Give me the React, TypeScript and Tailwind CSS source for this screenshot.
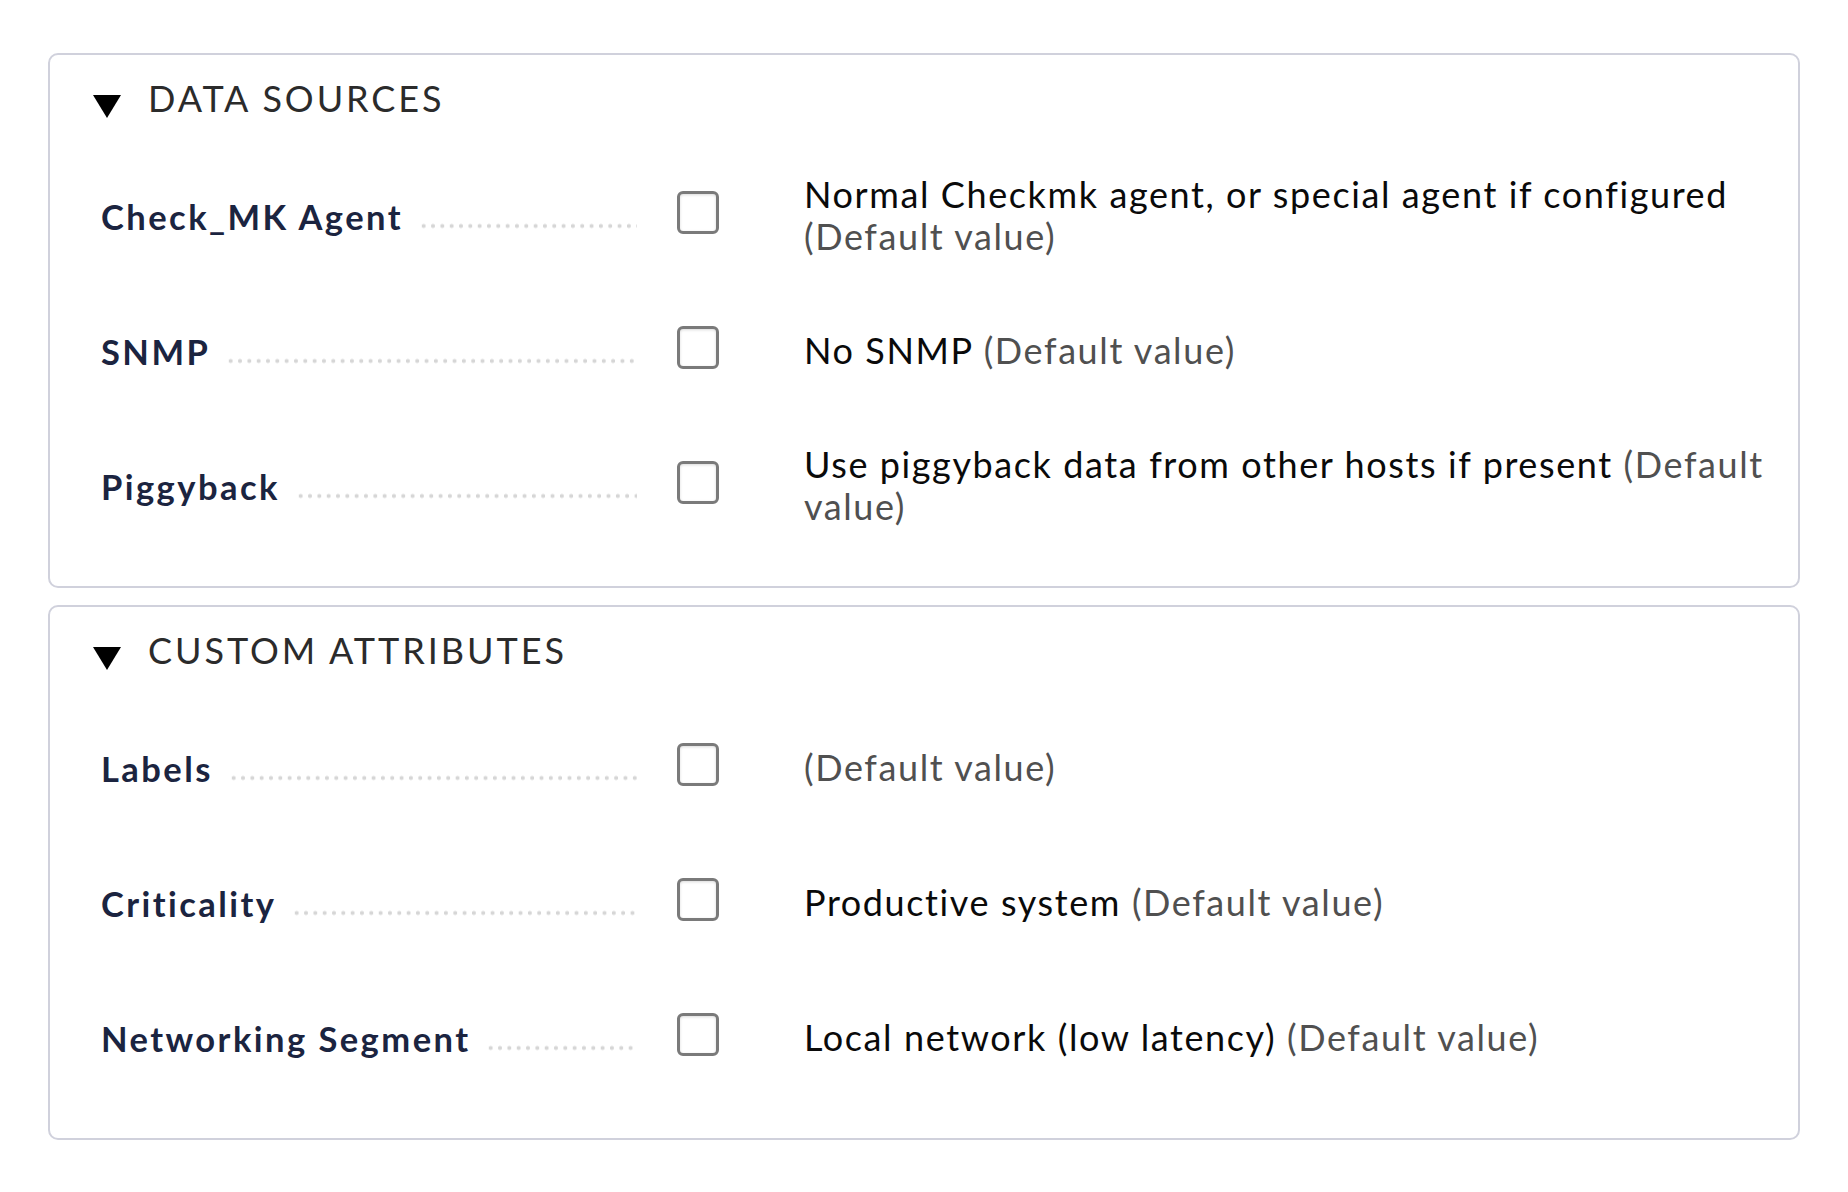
import React from "react";

type Row = { label: string; value?: string };

const sections: { title: string; rows: Row[] }[] = [
  {
    title: "DATA SOURCES",
    rows: [
      { label: "Check_MK Agent", value: "Normal Checkmk agent, or special agent if configured" },
      { label: "SNMP", value: "No SNMP" },
      { label: "Piggyback", value: "Use piggyback data from other hosts if present" },
    ],
  },
  {
    title: "CUSTOM ATTRIBUTES",
    rows: [
      { label: "Labels" },
      { label: "Criticality", value: "Productive system" },
      { label: "Networking Segment", value: "Local network (low latency)" },
    ],
  },
];

function Triangle() {
  return (
    <svg width="28" height="23" viewBox="0 0 28 23" className="mt-[19px] shrink-0">
      <polygon points="0,0 28,0 14,23" fill="#000" />
    </svg>
  );
}

function Section({ title, rows, first }: { title: string; rows: Row[]; first?: boolean }) {
  return (
    <div
      className={`border-2 border-[#d0d1dc] rounded-[10px] bg-white pt-[21px] pb-[34px] ${first ? "" : "mt-[17px]"}`}
    >
      <div className="flex items-start h-[44px] pl-[43px]">
        <Triangle />
        <div className="ml-[27px] text-[36px] leading-[44px] tracking-[2.95px] text-[#2b2b2b]">{title}</div>
      </div>
      <div className="mt-[27px]">
        {rows.map((r) => (
          <div key={r.label} className="flex items-center h-[135px] pl-[51px] pr-[20px]">
            <div className="w-[536px] shrink-0 flex items-baseline translate-y-[2px]">
              <span className="font-bold text-[34.5px] tracking-[2.45px] text-[#1b2440] whitespace-nowrap">
                {r.label}
              </span>
              <div className="flex-1 ml-[16px] h-[5px] -translate-y-[1.5px] bg-[radial-gradient(circle,#d6d6d6_1.7px,transparent_2.3px)] [background-size:9.33px_5px] [background-position:left_center]" />
            </div>
            <div className="ml-[40px] w-[42px] h-[43px] shrink-0 border-[3px] border-[#7a7a7a] rounded-[6px] bg-white shadow-[inset_0_1px_3px_rgba(0,0,0,0.15)] -translate-y-[2px]" />
            <div className="ml-[85px] flex-1 text-[36px] leading-[42px] tracking-[1.6px] text-[#0a0a0a]">
              {r.value ? <>{r.value} </> : null}
              <span className="text-[#505050]">(Default value)</span>
            </div>
          </div>
        ))}
      </div>
    </div>
  );
}

export default function App() {
  return (
    <div className="min-h-[1192px] bg-white px-[48px] pt-[53px] font-[Lato,sans-serif]">
      {sections.map((s, i) => (
        <Section key={s.title} title={s.title} rows={s.rows} first={i === 0} />
      ))}
    </div>
  );
}
